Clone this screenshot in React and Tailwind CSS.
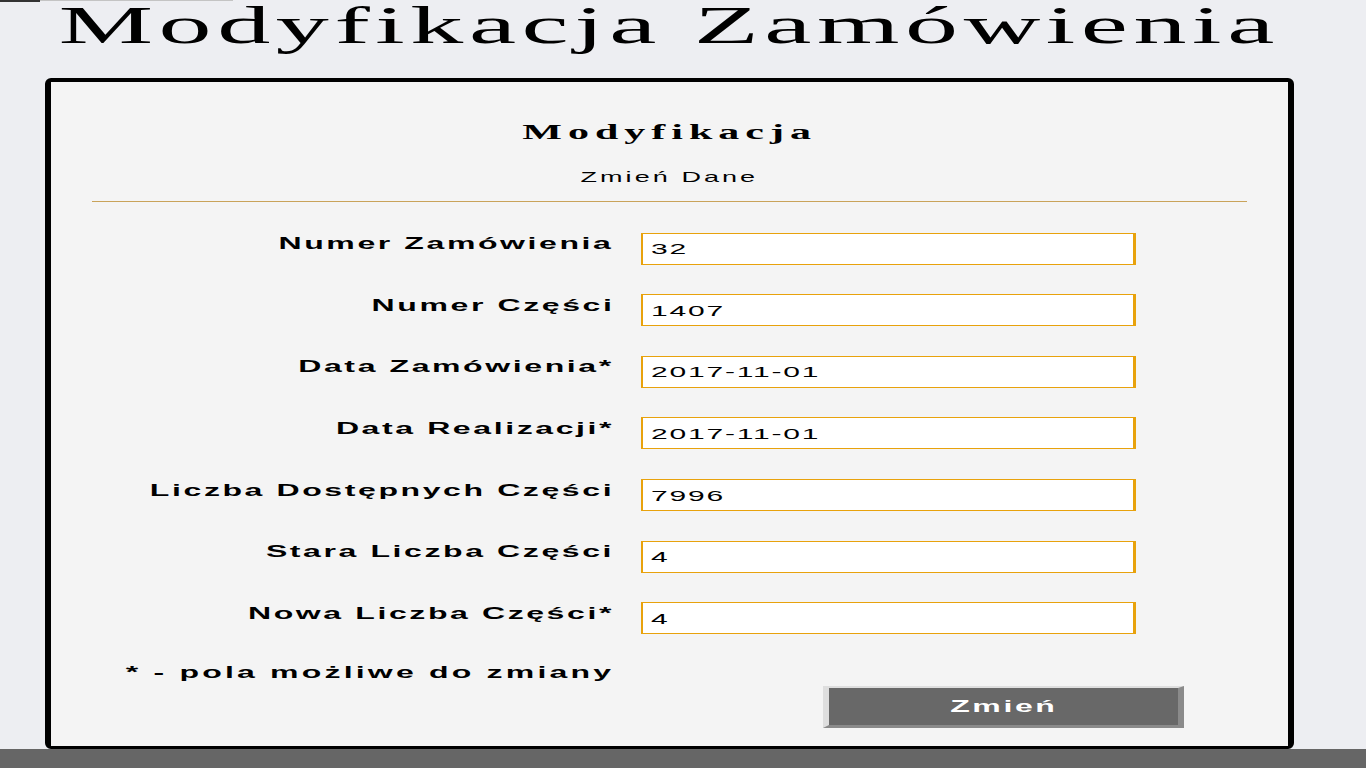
const rows = [
  { label: 'Numer Zamówienia', value: '32' },
  { label: 'Numer Części', value: '1407' },
  { label: 'Data Zamówienia*', value: '2017-11-01' },
  { label: 'Data Realizacji*', value: '2017-11-01' },
  { label: 'Liczba Dostępnych Części', value: '7996' },
  { label: 'Stara Liczba Części', value: '4' },
  { label: 'Nowa Liczba Części*', value: '4' },
];

const sans = { fontFamily: '"Liberation Sans", Arial, sans-serif' };
const serif = { fontFamily: '"Liberation Serif", "Times New Roman", serif' };

function FieldRow({ label, value }) {
  return (
    <div className="grid grid-cols-[563px_495px] gap-x-[27px]">
      <div className="flex items-start justify-end pt-[3.5px]">
        <span className="inline-block origin-right scale-x-[2] text-[16px] leading-[16px] font-bold tracking-[1.3px] text-black whitespace-nowrap" style={sans}>
          {label}
        </span>
      </div>
      <div className="flex h-[32px] items-center border-y border-l-2 border-r-[3px] border-[#e8a20c] bg-white pl-[8px]">
        <span className="inline-block origin-left scale-x-[2] text-[15px] leading-[15px] tracking-[0.9px] text-black" style={sans}>
          {value}
        </span>
      </div>
    </div>
  );
}

export default function App() {
  return (
    <div className="relative min-h-[768px] bg-[#edeef2]">
      <span className="absolute left-0 top-0 h-[2px] w-[40px] bg-[#333]" />
      <span className="absolute left-[40px] top-0 h-px w-[193px] bg-[#c4c4c4]" />

      <div className="pl-[45px] pr-[72px]">
        <div className="flex h-[78px] items-start justify-center">
          <h1 className="inline-block origin-center scale-x-[2] text-[53px] leading-[50px] font-normal tracking-[2.8px] text-black whitespace-nowrap" style={serif}>
            Modyfikacja Zamówienia
          </h1>
        </div>

        <div className="h-[671px] rounded-[6px] border-x-[6px] border-t-[4px] border-b-[3px] border-black bg-[#f4f4f4]">
          <div className="flex justify-center pt-[40px]">
            <h2 className="inline-block origin-center scale-x-[2] text-[21px] leading-[21px] font-bold tracking-[3px] text-black" style={serif}>
              Modyfikacja
            </h2>
          </div>
          <div className="mt-[26px] flex justify-center">
            <span className="inline-block origin-center scale-x-[1.8] text-[15px] leading-[15px] tracking-[1.7px] text-black" style={sans}>
              Zmień Dane
            </span>
          </div>
          <div className="mx-[41px] mt-[16.5px] h-px bg-[#c9a35a]" />

          <div className="mt-[31px] flex flex-col gap-y-[29.67px]">
            {rows.map((r) => (
              <FieldRow key={r.label} label={r.label} value={r.value} />
            ))}
          </div>

          <div className="mt-[27px] flex w-[563px] justify-end pt-[3.5px]">
            <span className="inline-block origin-right scale-x-[2] text-[16px] leading-[16px] font-bold tracking-[1.6px] text-black whitespace-nowrap" style={sans}>
              * - pola możliwe do zmiany
            </span>
          </div>

          <button
            type="button"
            className="ml-[772px] mt-[5.5px] flex h-[42px] w-[361px] items-center justify-center border-l-[6px] border-t-2 border-r-[6px] border-b-[3px] border-l-[#dedede] border-t-[#dedede] border-r-[#8a8a8a] border-b-[#8a8a8a] bg-[#686868]"
          >
            <span className="inline-block origin-center scale-x-[2] text-[16px] leading-[16px] font-bold tracking-[1.3px] text-white" style={sans}>
              Zmień
            </span>
          </button>
        </div>
      </div>
      <div className="h-[19px] bg-[#666666]" />
    </div>
  );
}
